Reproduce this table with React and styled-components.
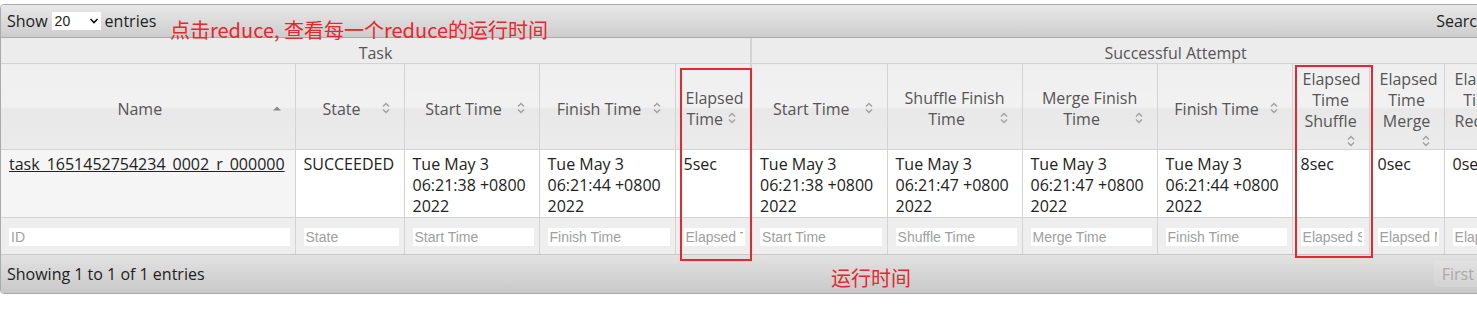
import React from "react";
import styled, { createGlobalStyle } from "styled-components";

const GlobalStyle = createGlobalStyle`
  body {
    margin: 0;
    padding-top: 4px;
    overflow: hidden;
    background: #fff;
    font-family: "Open Sans", "Noto Sans", sans-serif;
  }
`;

const Wrapper = styled.div`
  position: relative;
  width: 1700px;
`;

const Widget = styled.div`
  border: 1px solid #aaaaaa;
  border-radius: 4px;
  overflow: hidden;
  font-size: 16px;
  color: #222;
`;

const Toolbar = styled.div`
  display: flex;
  align-items: center;
  justify-content: space-between;
  height: 32px;
  padding: 0 6px;
  background: linear-gradient(#e8e8e8, #cdcdcd);
  border-bottom: 1px solid #aaaaaa;
  color: #222;
`;

const Length = styled.label`
  display: flex;
  align-items: center;
  gap: 4px;
`;

const Select = styled.div`
  display: flex;
  align-items: center;
  justify-content: space-between;
  width: 44px;
  height: 18px;
  padding: 0 2px 0 3px;
  background: #fff;
  font-family: "Liberation Sans", Arial, sans-serif;
  font-size: 14px;
`;

const SearchBox = styled.label`
  display: flex;
  align-items: center;
  gap: 6px;
  input {
    width: 190px;
    height: 16px;
    border: 1px solid #aaa;
  }
`;

const Table = styled.table`
  width: 1598px;
  table-layout: fixed;
  border-collapse: collapse;
`;

const GroupTh = styled.th`
  height: 20px;
  padding: 5px 0 0;
  font-weight: normal;
  line-height: 20px;
  color: #555;
  background: #ececec;
  border-bottom: 1px solid #d3d3d3;
  border-right: ${(p) => (p.split ? "2px solid #d3d3d3" : "none")};
  text-align: center;
`;

const Th = styled.th`
  padding: 5px 10px 0;
  font-weight: normal;
  line-height: 21px;
  color: #555;
  text-align: center;
  vertical-align: middle;
  background: linear-gradient(#efefef 0%, #f1f1f1 50%, #e8e8e8 52%, #ebebeb 100%);
  border-right: ${(p) => (p.split ? "2px solid #d3d3d3" : "1px solid #d3d3d3")};
  border-bottom: 1px solid #d3d3d3;
`;

const SortIcon = styled.span`
  float: right;
  width: 16px;
  height: 16px;
  margin-top: 1px;
  display: flex;
  align-items: center;
  justify-content: center;
`;

const Td = styled.td`
  padding: 4px 8px 0;
  line-height: 21px;
  vertical-align: top;
  background: ${(p) => (p.sorted ? "#f5f5f5" : "#fff")};
  border-right: ${(p) => (p.split ? "2px solid #d3d3d3" : "1px solid #d3d3d3")};
  border-bottom: 1px solid #d3d3d3;
  overflow: hidden;
`;

const TaskLink = styled.a`
  color: #222;
  text-decoration: underline;
`;

const FilterTh = styled.th`
  height: 36px;
  padding: 0 5px 0 8px;
  background: #eeeeee;
  border-right: ${(p) => (p.split ? "2px solid #d3d3d3" : "1px solid #d3d3d3")};
  border-bottom: 1px solid #c8c8c8;
  input {
    box-sizing: border-box;
    width: 100%;
    height: 18px;
    border: none;
    padding: 0 2px;
    background: #fff;
    font-family: "Liberation Sans", Arial, sans-serif;
    font-size: 14px;
    outline: none;
  }
  input::placeholder {
    color: #a0a0a0;
  }
`;

const Footer = styled.div`
  display: flex;
  align-items: center;
  justify-content: space-between;
  height: 38px;
  padding: 0 6px;
  background: linear-gradient(#e2e2e2, #c9c9c9);
`;

const Pager = styled.div`
  display: flex;
  gap: 2px;
`;

const PageButton = styled.span`
  padding: 2px 8px;
  border-radius: 3px;
  color: #a9a9a9;
  background: ${(p) => (p.disabled ? "rgba(255,255,255,0.12)" : "#e6e6e6")};
`;

const Note = styled.div`
  position: absolute;
  left: ${(p) => p.x}px;
  top: ${(p) => p.y}px;
  color: #e8262d;
  font-family: "Noto Sans CJK SC", "Microsoft YaHei", sans-serif;
  font-size: 20px;
  line-height: 24px;
  white-space: nowrap;
`;

const RedBox = styled.div`
  position: absolute;
  left: ${(p) => p.x}px;
  top: ${(p) => p.y}px;
  width: ${(p) => p.w}px;
  height: ${(p) => p.h}px;
  border: 2px solid #e8262d;
  box-sizing: border-box;
`;

const Both = () => (
  <svg width="12" height="14" viewBox="0 0 12 14">
    <path d="M3 5.5 L6 2.5 L9 5.5 M3 8.5 L6 11.5 L9 8.5" fill="none" stroke="#a0a0a0" strokeWidth="1.4" />
  </svg>
);

const Up = () => (
  <svg width="12" height="12" viewBox="0 0 12 12">
    <path d="M2 8.5 L6 4.5 L10 8.5 Z" fill="#8a8a8a" />
  </svg>
);

const columns = [
  { w: 294, label: "Name", icon: "up", ph: "ID", sorted: true },
  { w: 109, label: "State", ph: "State" },
  { w: 135, label: "Start Time", ph: "Start Time" },
  { w: 136, label: "Finish Time", ph: "Finish Time" },
  { w: 76, label: "Elapsed Time", ph: "Elapsed Time", split: true },
  { w: 136, label: "Start Time", ph: "Start Time" },
  { w: 135, label: "Shuffle Finish Time", ph: "Shuffle Time" },
  { w: 135, label: "Merge Finish Time", ph: "Merge Time" },
  { w: 135, label: "Finish Time", ph: "Finish Time" },
  { w: 77, label: "Elapsed Time Shuffle", ph: "Elapsed Shuffle Time" },
  { w: 75, label: "Elapsed Time Merge", ph: "Elapsed Merge Time" },
  { w: 75, label: "Elapsed Time Reduce", ph: "Elapsed Reduce Time" },
  { w: 80, label: "Elapsed Time", ph: "Elapsed Time" },
];

const row = [
  <TaskLink href="#">task_1651452754234_0002_r_000000</TaskLink>,
  "SUCCEEDED",
  "Tue May 3 06:21:38 +0800 2022",
  "Tue May 3 06:21:44 +0800 2022",
  "5sec",
  "Tue May 3 06:21:38 +0800 2022",
  "Tue May 3 06:21:47 +0800 2022",
  "Tue May 3 06:21:47 +0800 2022",
  "Tue May 3 06:21:44 +0800 2022",
  "8sec",
  "0sec",
  "0sec",
  "8sec",
];

const App = () => (
  <Wrapper>
    <GlobalStyle />
    <Widget>
      <Toolbar>
        <Length>
          Show
          <Select>
            20
            <svg width="10" height="8" viewBox="0 0 10 8">
              <path d="M1.5 2 L5 5.5 L8.5 2" fill="none" stroke="#111" strokeWidth="1.6" />
            </svg>
          </Select>
          entries
        </Length>
        <SearchBox>
          Search:
          <input type="text" />
        </SearchBox>
      </Toolbar>
      <Table>
        <colgroup>
          {columns.map((c, i) => (
            <col key={i} style={{ width: c.w }} />
          ))}
        </colgroup>
        <thead>
          <tr>
            <GroupTh colSpan={5} split>
              Task
            </GroupTh>
            <GroupTh colSpan={8}>Successful Attempt</GroupTh>
          </tr>
          <tr>
            {columns.map((c, i) => (
              <Th key={i} split={c.split}>
                {c.label}
                <SortIcon>{c.icon === "up" ? <Up /> : <Both />}</SortIcon>
              </Th>
            ))}
          </tr>
        </thead>
        <tbody>
          <tr>
            {row.map((v, i) => (
              <Td key={i} sorted={columns[i].sorted} split={columns[i].split}>
                {v}
              </Td>
            ))}
          </tr>
        </tbody>
        <tfoot>
          <tr>
            {columns.map((c, i) => (
              <FilterTh key={i} split={c.split}>
                <input type="text" placeholder={c.ph} />
              </FilterTh>
            ))}
          </tr>
        </tfoot>
      </Table>
      <Footer>
        <span>Showing 1 to 1 of 1 entries</span>
        <Pager>
          <PageButton disabled>First</PageButton>
          <PageButton disabled>Previous</PageButton>
          <PageButton>1</PageButton>
          <PageButton disabled>Next</PageButton>
          <PageButton disabled>Last</PageButton>
        </Pager>
      </Footer>
    </Widget>
    <Note x={170} y={14}>点击reduce, 查看每一个reduce的运行时间</Note>
    <Note x={831} y={262}>运行时间</Note>
    <RedBox x={680} y={64} w={72} h={193} />
    <RedBox x={1295} y={61} w={78} h={193} />
  </Wrapper>
);

export default App;
